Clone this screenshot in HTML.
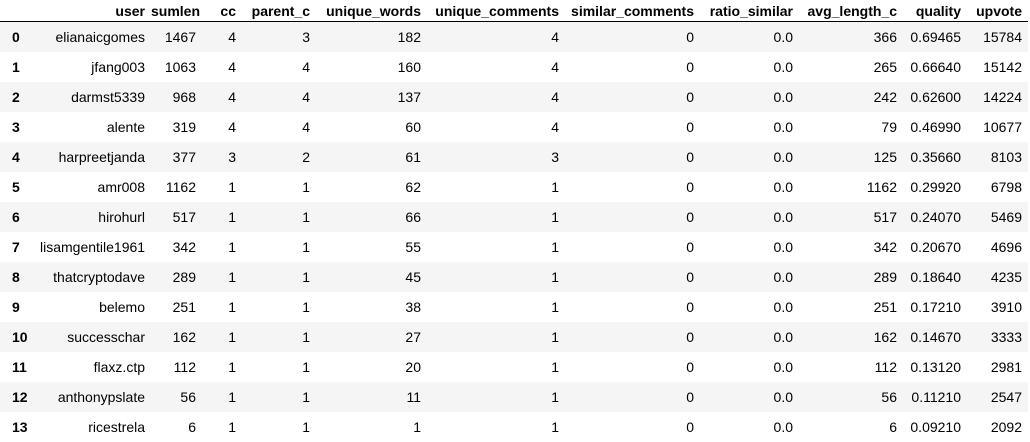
<!DOCTYPE html>
<html><head><style>
body{margin:0;background:#fff;font-family:"Liberation Sans",Arial,sans-serif;font-size:14px;color:#000;}
table{border-collapse:collapse;table-layout:fixed;width:1028px;}
th,td{text-align:right;padding:0 6px 0 0;white-space:nowrap;overflow:hidden;}
thead th{height:21px;border-bottom:1px solid #000;font-weight:bold;vertical-align:middle;line-height:16px;padding-top:0;}
tbody td,tbody th{height:30px;line-height:30px;}
tbody th{text-align:left;padding-left:12px;font-weight:bold;}
tbody tr:nth-child(odd){background:#f5f5f5;}
</style></head><body>
<table>
<colgroup><col style="width:40px"><col style="width:111px"><col style="width:51px"><col style="width:40px"><col style="width:74px"><col style="width:111px"><col style="width:138px"><col style="width:135px"><col style="width:99px"><col style="width:104px"><col style="width:64px"><col style="width:61px"></colgroup>
<thead><tr><th></th><th>user</th><th>sumlen</th><th>cc</th><th>parent_c</th><th>unique_words</th><th>unique_comments</th><th>similar_comments</th><th>ratio_similar</th><th>avg_length_c</th><th>quality</th><th>upvote</th></tr></thead>
<tbody>
<tr><th>0</th><td>elianaicgomes</td><td>1467</td><td>4</td><td>3</td><td>182</td><td>4</td><td>0</td><td>0.0</td><td>366</td><td>0.69465</td><td>15784</td></tr>
<tr><th>1</th><td>jfang003</td><td>1063</td><td>4</td><td>4</td><td>160</td><td>4</td><td>0</td><td>0.0</td><td>265</td><td>0.66640</td><td>15142</td></tr>
<tr><th>2</th><td>darmst5339</td><td>968</td><td>4</td><td>4</td><td>137</td><td>4</td><td>0</td><td>0.0</td><td>242</td><td>0.62600</td><td>14224</td></tr>
<tr><th>3</th><td>alente</td><td>319</td><td>4</td><td>4</td><td>60</td><td>4</td><td>0</td><td>0.0</td><td>79</td><td>0.46990</td><td>10677</td></tr>
<tr><th>4</th><td>harpreetjanda</td><td>377</td><td>3</td><td>2</td><td>61</td><td>3</td><td>0</td><td>0.0</td><td>125</td><td>0.35660</td><td>8103</td></tr>
<tr><th>5</th><td>amr008</td><td>1162</td><td>1</td><td>1</td><td>62</td><td>1</td><td>0</td><td>0.0</td><td>1162</td><td>0.29920</td><td>6798</td></tr>
<tr><th>6</th><td>hirohurl</td><td>517</td><td>1</td><td>1</td><td>66</td><td>1</td><td>0</td><td>0.0</td><td>517</td><td>0.24070</td><td>5469</td></tr>
<tr><th>7</th><td>lisamgentile1961</td><td>342</td><td>1</td><td>1</td><td>55</td><td>1</td><td>0</td><td>0.0</td><td>342</td><td>0.20670</td><td>4696</td></tr>
<tr><th>8</th><td>thatcryptodave</td><td>289</td><td>1</td><td>1</td><td>45</td><td>1</td><td>0</td><td>0.0</td><td>289</td><td>0.18640</td><td>4235</td></tr>
<tr><th>9</th><td>belemo</td><td>251</td><td>1</td><td>1</td><td>38</td><td>1</td><td>0</td><td>0.0</td><td>251</td><td>0.17210</td><td>3910</td></tr>
<tr><th>10</th><td>successchar</td><td>162</td><td>1</td><td>1</td><td>27</td><td>1</td><td>0</td><td>0.0</td><td>162</td><td>0.14670</td><td>3333</td></tr>
<tr><th>11</th><td>flaxz.ctp</td><td>112</td><td>1</td><td>1</td><td>20</td><td>1</td><td>0</td><td>0.0</td><td>112</td><td>0.13120</td><td>2981</td></tr>
<tr><th>12</th><td>anthonypslate</td><td>56</td><td>1</td><td>1</td><td>11</td><td>1</td><td>0</td><td>0.0</td><td>56</td><td>0.11210</td><td>2547</td></tr>
<tr><th>13</th><td>ricestrela</td><td>6</td><td>1</td><td>1</td><td>1</td><td>1</td><td>0</td><td>0.0</td><td>6</td><td>0.09210</td><td>2092</td></tr>
</tbody></table>
</body></html>
